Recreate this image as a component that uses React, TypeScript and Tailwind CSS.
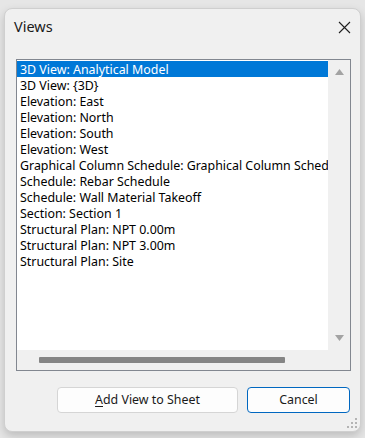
import { X } from "lucide-react";

const views = [
  "3D View: Analytical Model",
  "3D View: {3D}",
  "Elevation: East",
  "Elevation: North",
  "Elevation: South",
  "Elevation: West",
  "Graphical Column Schedule: Graphical Column Schedule",
  "Schedule: Rebar Schedule",
  "Schedule: Wall Material Takeoff",
  "Section: Section 1",
  "Structural Plan: NPT 0.00m",
  "Structural Plan: NPT 3.00m",
  "Structural Plan: Site",
];

function Grip() {
  const dots = [
    [8, 0],
    [4, 4],
    [8, 4],
    [0, 8],
    [4, 8],
    [8, 8],
  ];
  return (
    <svg width="11" height="11" viewBox="0 0 11 11" className="absolute right-[2px] bottom-[2px]">
      {dots.map(([x, y], i) => (
        <rect key={i} x={x} y={y} width="2" height="2" fill="#b4b4b4" />
      ))}
    </svg>
  );
}

export default function App() {
  return (
    <div
      className="w-[365px] h-[438px] bg-[#e6e6e6] pt-[8px] pl-[4px]"
      style={{ fontFamily: '"Noto Sans", "Open Sans", sans-serif' }}
    >
      <div className="relative w-[357px] h-[424px] rounded-lg border border-[#cfcfcf] bg-[#f0f0f0] shadow-[0_4px_10px_rgba(0,0,0,0.18)]">
        {/* title bar */}
        <div className="h-[36px] flex items-center justify-between pl-[9px] pr-[8px]">
          <span className="text-[14.5px] text-[#1a1a1a]">Views</span>
          <svg width="13" height="13" viewBox="0 0 13 13" className="mr-[1px]">
            <path d="M1 1 L12 12 M12 1 L1 12" stroke="#1f1f1f" strokeWidth="1.1" fill="none" />
          </svg>
        </div>

        {/* list box */}
        <div className="mt-[14px] ml-[11px] w-[335px] h-[312px] border border-[#828790] bg-white flex flex-col">
          <div className="flex flex-1 min-h-0">
            <div className="flex-1 overflow-hidden pt-[1px] text-[12.4px] leading-[17px]">
              {views.map((v, i) => (
                <div
                  key={v}
                  className={
                    i === 0
                      ? "h-[16px] pl-[3px] whitespace-nowrap overflow-hidden bg-[#0078d7] text-white"
                      : "h-[16px] pl-[3px] whitespace-nowrap overflow-hidden text-black"
                  }
                >
                  {v}
                </div>
              ))}
            </div>
            <div className="w-[22px] bg-[#f0f0f0] flex flex-col items-center justify-between py-[9px]">
              <svg width="9" height="6" viewBox="0 0 9 6">
                <path d="M4.5 0 L9 6 L0 6 Z" fill="#a3a3a3" />
              </svg>
              <svg width="9" height="6" viewBox="0 0 9 6">
                <path d="M0 0 L9 0 L4.5 6 Z" fill="#a3a3a3" />
              </svg>
            </div>
          </div>
          <div className="h-[20px] bg-[#f0f0f0] flex items-center pl-[22px]">
            <div className="w-[246px] h-[6px] rounded-[1px] bg-[#858585]" />
          </div>
        </div>

        {/* buttons */}
        <div className="mt-[16px] pr-[10px] flex justify-end gap-[9px] text-[12.4px] text-[#1a1a1a]">
          <button className="w-[181px] h-[26px] rounded-[4px] border border-[#d5d5d5] bg-[#fdfdfd]">
            <span className="underline underline-offset-2">A</span>dd View to Sheet
          </button>
          <button className="w-[103px] h-[26px] rounded-[4px] border border-[#0067c0] bg-[#fdfdfd]">
            Cancel
          </button>
        </div>

        <Grip />
      </div>
    </div>
  );
}
